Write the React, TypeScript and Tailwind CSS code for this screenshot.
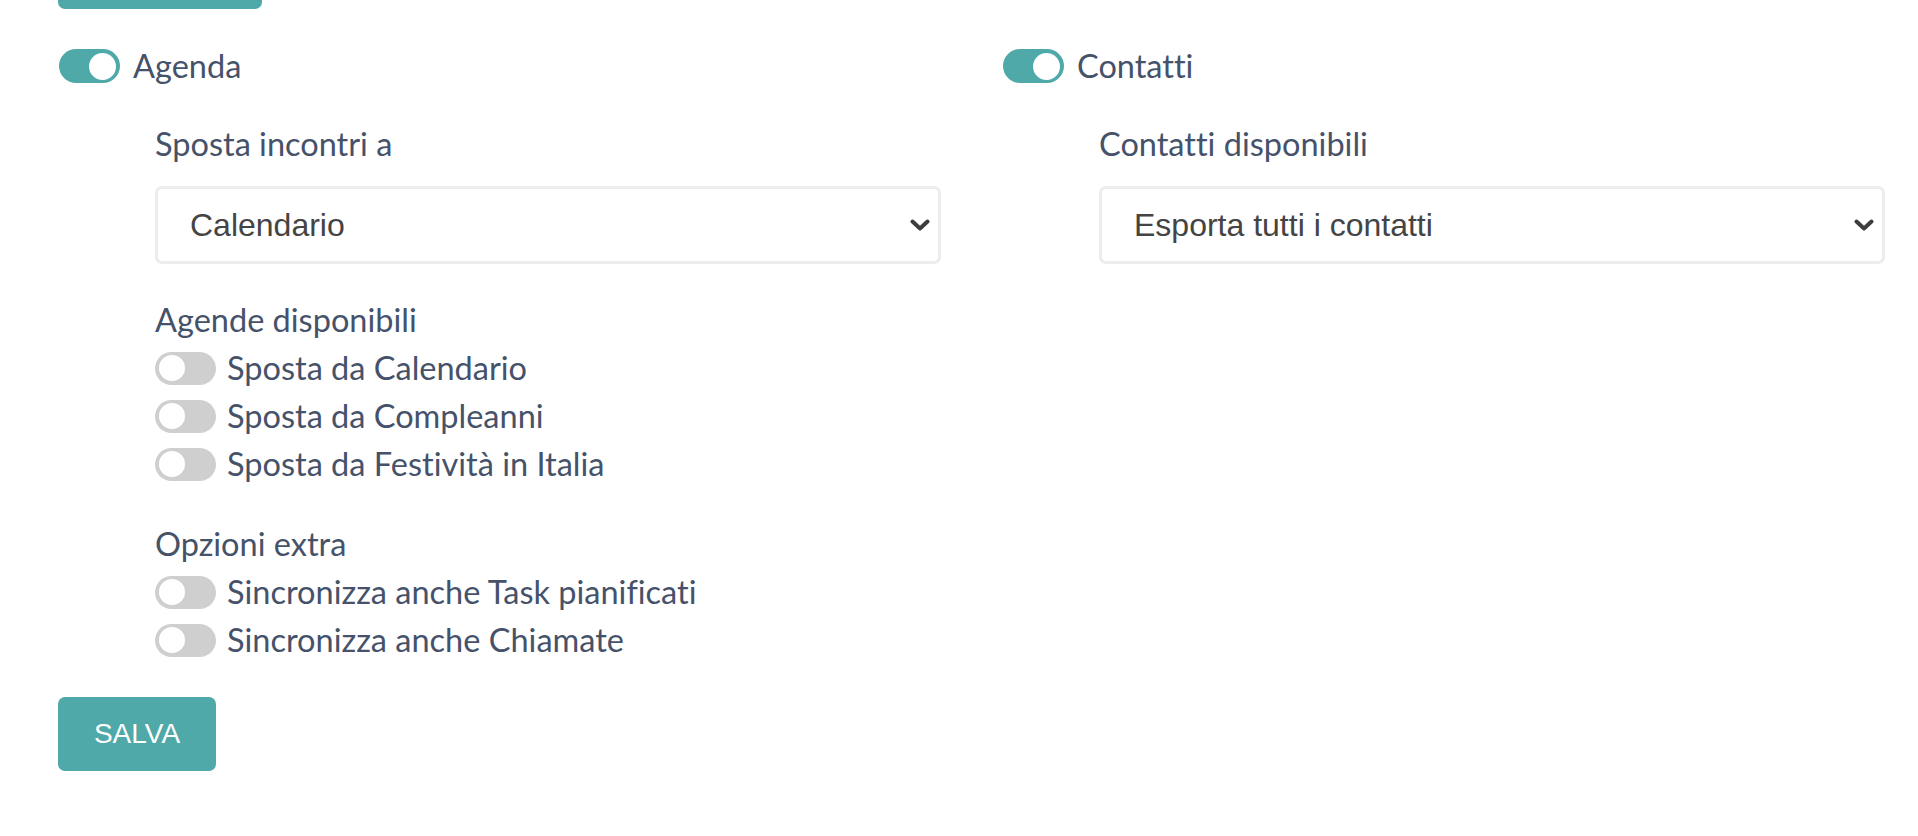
import React from 'react';

const teal = 'bg-[#4fa9a8]';
const textBase = "text-[32.5px] text-[#45526a] font-['Lato',sans-serif] [font-variant-ligatures:none]";

const BigToggle: React.FC<{ label: string }> = ({ label }) => (
  <div className="flex items-center h-[34px]">
    <div className={`w-[61px] h-[34px] rounded-full ${teal} flex items-center justify-end pr-[4px]`}>
      <div className="w-[27px] h-[27px] rounded-full bg-white" />
    </div>
    <span className={`ml-[13px] leading-[34px] ${textBase}`}>{label}</span>
  </div>
);

const SmallToggle: React.FC<{ label: string }> = ({ label }) => (
  <div className="flex items-center h-[48px]">
    <div className="w-[61px] h-[33px] rounded-full bg-[#cfcfcf] flex items-center pl-[4px]">
      <div className="w-[26px] h-[26px] rounded-full bg-white" />
    </div>
    <span className={`ml-[11px] leading-[48px] ${textBase}`}>{label}</span>
  </div>
);

const FieldLabel: React.FC<{ children: React.ReactNode; className?: string }> = ({ children, className }) => (
  <div className={`leading-[48px] ${textBase} ${className ?? ''}`}>
    {children}
  </div>
);

const FakeSelect: React.FC<{ value: string }> = ({ value }) => (
  <div className="mt-[18px] h-[78px] border-[3px] border-[#eaeced] rounded-[7px] bg-white flex items-center justify-between pl-[32px] pr-[8px]">
    <span className="text-[32px] text-[#444444] font-['Liberation_Sans',Arial,sans-serif]">{value}</span>
    <svg width="20" height="12" viewBox="0 0 20 12" fill="none">
      <path d="M2.5 2.5 L10 9.5 L17.5 2.5" stroke="#3d3d3d" strokeWidth="4" strokeLinecap="round" strokeLinejoin="round" />
    </svg>
  </div>
);

export default function App() {
  return (
    <div className="min-h-screen bg-white pl-[29px] pr-[1px] overflow-hidden">
      <div className="pl-[29px]">
        <div className={`-mt-[41px] w-[204px] h-[50px] rounded-[7px] ${teal}`} />
      </div>

      <div className="grid grid-cols-2 mt-[40px]">
        <div className="pl-[30px] pr-[32px]">
          <BigToggle label="Agenda" />
          <div className="ml-[96px]">
            <FieldLabel className="mt-[37px]">Sposta incontri a</FieldLabel>
            <FakeSelect value="Calendario" />

            <FieldLabel className="mt-[32px]">Agende disponibili</FieldLabel>
            <SmallToggle label="Sposta da Calendario" />
            <SmallToggle label="Sposta da Compleanni" />
            <SmallToggle label="Sposta da Festività in Italia" />

            <FieldLabel className="mt-[32px]">Opzioni extra</FieldLabel>
            <SmallToggle label="Sincronizza anche Task pianificati" />
            <SmallToggle label="Sincronizza anche Chiamate" />
          </div>

          <button className={`mt-[33px] -ml-[1px] w-[158px] h-[74px] rounded-[7px] ${teal} text-white text-[28px] font-['Liberation_Sans',Arial,sans-serif]`}>
            SALVA
          </button>
        </div>

        <div className="pl-[30px] pr-[32px]">
          <BigToggle label="Contatti" />
          <div className="ml-[96px]">
            <FieldLabel className="mt-[37px]">Contatti disponibili</FieldLabel>
            <FakeSelect value="Esporta tutti i contatti" />
          </div>
        </div>
      </div>
    </div>
  );
}
